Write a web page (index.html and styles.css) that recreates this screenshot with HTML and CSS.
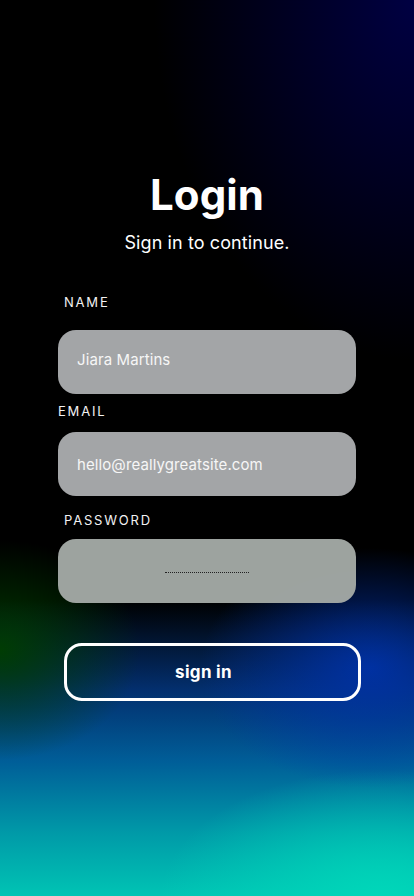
FILE: index.html
```html
<!DOCTYPE html>
<html lang="en">
<head>
<meta charset="utf-8">
<meta name="viewport" content="width=device-width, initial-scale=1">
<title>Login</title>
<link rel="stylesheet" href="styles.css">
</head>
<body>
<main class="screen">
  <h1 class="title">Login</h1>
  <p class="subtitle">Sign in to continue.</p>
  <form class="form">
    <label class="label label-indent label-name">NAME</label>
    <div class="field field-name"><span class="value">Jiara Martins</span></div>
    <label class="label label-email">EMAIL</label>
    <div class="field"><span class="value">hello@reallygreatsite.com</span></div>
    <label class="label label-indent label-pass">PASSWORD</label>
    <div class="field field-pass"><span class="dots"></span></div>
    <button type="button" class="btn">sign in</button>
  </form>
</main>
</body>
</html>
```
FILE: styles.css
```css
html, body {
  margin: 0;
  padding: 0;
}
body {
  width: 414px;
  height: 896px;
  overflow: hidden;
  font-family: Inter, "Open Sans", sans-serif;
  color: #fff;
  background:
    radial-gradient(ellipse 170px 120px at 370px 668px, rgba(0, 50, 170, 0.9), rgba(0, 50, 170, 0) 100%),
    radial-gradient(ellipse 140px 110px at 0px 650px, rgba(0, 62, 0, 0.95), rgba(0, 62, 0, 0) 100%),
    radial-gradient(ellipse 260px 360px at 414px 0px, rgba(0, 0, 70, 0.95), rgba(0, 0, 40, 0) 100%),
    radial-gradient(ellipse 220px 130px at 380px 900px, rgba(0, 215, 185, 1), rgba(0, 215, 185, 0) 100%),
    linear-gradient(180deg, #000 0%, #000 67%, #032f6e 77%, #005e98 85%, #009aa8 93%, #00c4b4 100%);
}
.screen {
  display: flex;
  flex-direction: column;
  align-items: center;
  padding-top: 170px;
}
.title {
  margin: 0;
  font-size: 42px;
  line-height: 50px;
  font-weight: 700;
  letter-spacing: 0.1px;
}
.subtitle {
  margin: 11px 0 0;
  font-size: 18px;
  line-height: 24px;
  font-weight: 400;
  letter-spacing: 0.1px;
}
.form {
  align-self: flex-start;
  width: 298px;
  margin: 39px 0 0 58px;
  display: flex;
  flex-direction: column;
}
.label {
  display: block;
  font-size: 13px;
  line-height: 16px;
  letter-spacing: 1.8px;
  font-weight: 400;
  color: #f2f2f2;
}
.label-indent {
  margin-left: 6px;
}
.label-name {
  margin-bottom: 20px;
}
.label-email {
  margin-top: 9px;
  margin-bottom: 13px;
}
.label-pass {
  margin-top: 16px;
  margin-bottom: 11px;
}
.field {
  height: 64px;
  border-radius: 18px;
  background: rgba(168, 170, 172, 0.97);
  display: flex;
  align-items: center;
  padding-left: 19px;
}
.field-name .value {
  margin-bottom: 5px;
}
.value {
  font-size: 15px;
  color: #f6f6f6;
  letter-spacing: 0.1px;
}
.field-pass {
  justify-content: center;
  padding-left: 0;
  background: rgba(162, 168, 164, 0.97);
}
.dots {
  width: 84px;
  height: 0;
  border-bottom: 1px dotted #222;
  margin-top: 2px;
}
.btn {
  margin: 40px 0 0 6px;
  width: 297px;
  height: 58px;
  border: 3px solid #fff;
  border-radius: 18px;
  background: transparent;
  color: #fff;
  font-family: Inter, "Open Sans", sans-serif;
  font-size: 17px;
  font-weight: 700;
  letter-spacing: 0.3px;
  padding: 0 18px 0 0;
}
```
